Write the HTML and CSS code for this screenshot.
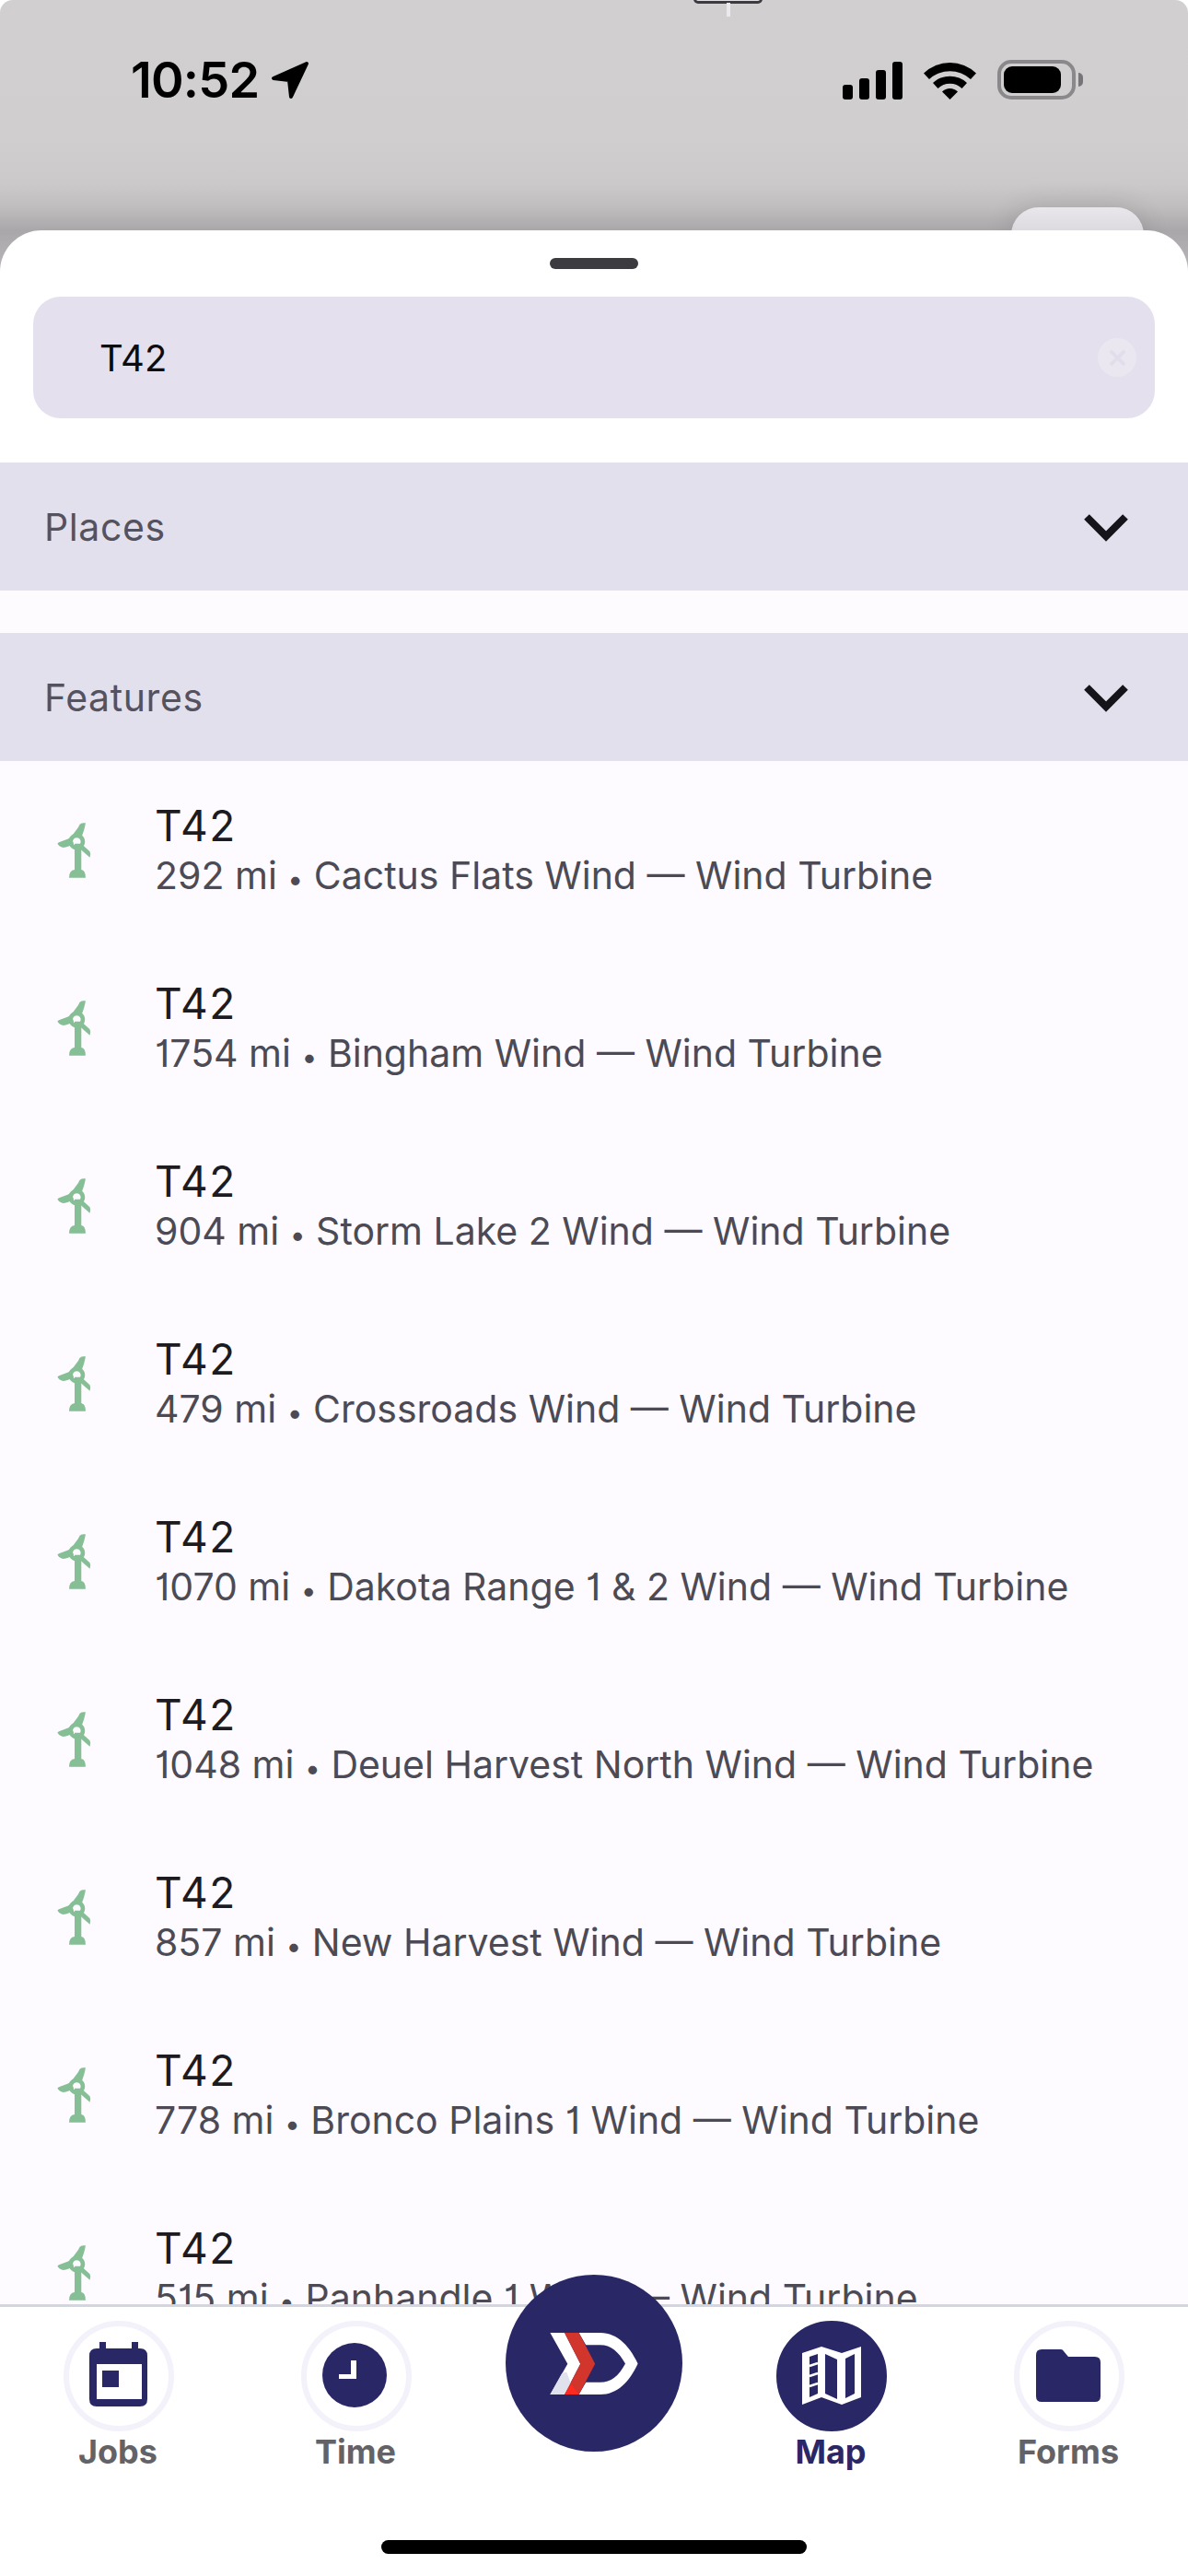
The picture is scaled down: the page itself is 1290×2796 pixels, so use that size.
FILE: index.html
```html
<!DOCTYPE html>
<html lang="en">
<head>
<meta charset="utf-8">
<title>Map search</title>
<link rel="stylesheet" href="styles.css">
</head>
<body>
<svg class="defs" width="0" height="0" aria-hidden="true">
  <symbol id="turbine" viewBox="120 90 120 190">
    <path d="M183 165H205V250Q219 252 219 276H165Q165 252 183 250Z"/>
    <path d="M176 138C182 125 195 115 200 101Q208 95 219 97C216 115 213 125 206 142Z"/>
    <path d="M172 143C160 152 140 155 127 163Q130 172 143 177C155 178 170 172 180 165Z"/>
    <path d="M205 165L233 190Q237 197 233 210C222 200 210 190 197 178Z"/>
    <path fill-rule="evenodd" d="M190 131A27 27 0 1 1 189.900 131ZM190 145A13 13 0 1 0 190.100 145Z"/>
  </symbol>
  <symbol id="chev" viewBox="0 0 48 30">
    <path d="M3 3L24 24L45 3" fill="none" stroke="currentColor" stroke-width="8"/>
  </symbol>
</svg>
<div class="phone">
  <div class="notch"></div>
  <div class="notch-line"></div>
  <header class="status">
    <div class="clock">
      <span class="time">10:52</span>
      <svg class="loc" viewBox="0 0 42 42"><path d="M39 3L3 19L20 21L22 39Z" fill="#000" stroke="#000" stroke-width="4" stroke-linejoin="round"/></svg>
    </div>
    <div class="indicators">
      <div class="signal"><i class="b1"></i><i class="b2"></i><i class="b3"></i><i class="b4"></i></div>
      <svg class="wifi" viewBox="0 0 57 42"><path d="M0 13.500A41 41 0 0 1 57 13.500L51 20A33 33 0 0 0 6 20Z"/><path d="M10 24A27 27 0 0 1 47 24L41.500 30A19 19 0 0 0 15.500 30Z"/><path d="M20 33.500A12 12 0 0 1 37 33.500L28.500 42Z"/></svg>
      <div class="battery"><div class="cell"><div class="fill"></div></div><div class="cap"></div></div>
    </div>
  </header>
  <div class="map-button"></div>
  <main class="sheet">
    <div class="handle"></div>
    <div class="search">
      <span class="query">T42</span>
      <span class="clear"><svg viewBox="0 0 20 20"><path d="M2 2L18 18M18 2L2 18" stroke="#e1deeb" stroke-width="4"/></svg></span>
    </div>
    <section class="band"><span>Places</span><svg class="chevron"><use href="#chev"/></svg></section>
    <div class="gap"></div>
    <section class="band"><span>Features</span><svg class="chevron"><use href="#chev"/></svg></section>
    <div class="list">
      <article class="row"><svg class="turb"><use href="#turbine"/></svg><div class="info"><div class="name">T42</div><div class="sub">292 mi <span class="dot">•</span> Cactus Flats Wind — Wind Turbine</div></div></article>
      <article class="row"><svg class="turb"><use href="#turbine"/></svg><div class="info"><div class="name">T42</div><div class="sub">1754 mi <span class="dot">•</span> Bingham Wind — Wind Turbine</div></div></article>
      <article class="row"><svg class="turb"><use href="#turbine"/></svg><div class="info"><div class="name">T42</div><div class="sub">904 mi <span class="dot">•</span> Storm Lake 2 Wind — Wind Turbine</div></div></article>
      <article class="row"><svg class="turb"><use href="#turbine"/></svg><div class="info"><div class="name">T42</div><div class="sub">479 mi <span class="dot">•</span> Crossroads Wind — Wind Turbine</div></div></article>
      <article class="row"><svg class="turb"><use href="#turbine"/></svg><div class="info"><div class="name">T42</div><div class="sub">1070 mi <span class="dot">•</span> Dakota Range 1 &amp; 2 Wind — Wind Turbine</div></div></article>
      <article class="row"><svg class="turb"><use href="#turbine"/></svg><div class="info"><div class="name">T42</div><div class="sub">1048 mi <span class="dot">•</span> Deuel Harvest North Wind — Wind Turbine</div></div></article>
      <article class="row"><svg class="turb"><use href="#turbine"/></svg><div class="info"><div class="name">T42</div><div class="sub">857 mi <span class="dot">•</span> New Harvest Wind — Wind Turbine</div></div></article>
      <article class="row"><svg class="turb"><use href="#turbine"/></svg><div class="info"><div class="name">T42</div><div class="sub">778 mi <span class="dot">•</span> Bronco Plains 1 Wind — Wind Turbine</div></div></article>
      <article class="row"><svg class="turb"><use href="#turbine"/></svg><div class="info"><div class="name">T42</div><div class="sub">515 mi <span class="dot">•</span> Panhandle 1 Wind — Wind Turbine</div></div></article>
    </div>
    <nav class="tabs">
      <a class="tab">
        <span class="ring">
          <svg class="i-jobs" viewBox="0 0 63 70"><path fill-rule="evenodd" d="M11 0H18V7H46V0H53V7H55Q63 7 63 15V62Q63 70 55 70H8Q0 70 0 62V15Q0 7 8 7H11ZM8 24V62H57V24ZM14 31H32V49H14Z"/></svg>
        </span>
        <span class="label">Jobs</span>
      </a>
      <a class="tab">
        <span class="ring">
          <svg class="i-time" viewBox="0 0 70 70"><circle cx="35" cy="35" r="35"/><path d="M31 19H37V39H18V34H31Z" fill="#fff"/></svg>
        </span>
        <span class="label">Time</span>
      </a>
      <a class="tab tab-hub" aria-label="Home">
        <span class="hub">
          <svg class="logo" viewBox="201 243 287 202">
            <path d="M295 243H365C420 243 460 285 488 344C460 405 420 445 365 445H295L318 405H365C400 405 425 385 447 344C425 305 400 283 365 283H318Z" fill="#fff"/>
            <path d="M201 243H248L300 345L248 445H201L258 345Z" fill="#fff"/>
            <path d="M201 445L240 375L255 372L270 412L248 445Z" fill="#dfe1ec"/>
            <path d="M248 243H295L348 345L295 445H248L300 345Z" fill="#d2352c"/>
            <path d="M248 445L270 412L295 445Z" fill="#ff2a20"/>
          </svg>
        </span>
      </a>
      <a class="tab tab-active">
        <span class="ring ring-filled">
          <svg class="i-map" viewBox="0 0 64 64"><path fill-rule="evenodd" d="M0 7L21 0L43 7L64 0V55L43 63L21 55L0 63ZM8 11V55L17 51V8ZM25 8V51L38 57V14ZM47 13V56L57 51V8Z" fill="#fff"/><path d="M8 21L17 18M8 32L17 29M8 43L17 40" stroke="#fff" stroke-width="2.500"/></svg>
        </span>
        <span class="label">Map</span>
      </a>
      <a class="tab">
        <span class="ring">
          <svg class="i-forms" viewBox="0 0 70 57"><path d="M6 0H27Q29 0 30 2L35 8H64Q70 8 70 14V51Q70 57 64 57H6Q0 57 0 51V6Q0 0 6 0Z"/></svg>
        </span>
        <span class="label">Forms</span>
      </a>
      <div class="home-bar"></div>
    </nav>
  </main>
</div>
</body>
</html>
```
FILE: styles.css
```css
* { box-sizing: border-box; }
html, body { margin: 0; padding: 0; background: #fff; }
body { font-family: Inter, "Liberation Sans", sans-serif; }
.defs { position: absolute; }

.phone {
  position: relative;
  width: 1290px;
  height: 2796px;
  display: flex;
  flex-direction: column;
  overflow: hidden;
  border-radius: 14px 14px 0 0;
  background: linear-gradient(#d1cfd0 0, #d0cecf 150px, #cbc9ca 200px, #bfbdbe 225px, #a9a7a9 250px, #bab8ba 300px, #fff 301px);
}

.notch {
  position: absolute;
  left: 753px;
  top: -6px;
  width: 75px;
  height: 10px;
  border: 3px solid #3c3b42;
  border-radius: 8px;
  background: #e2e0e3;
}
.notch-line {
  position: absolute;
  left: 789px;
  top: 3px;
  width: 4px;
  height: 15px;
  background: #ebe9ed;
}

.status {
  height: 250px;
  flex: none;
  padding: 64px 114px 0 142px;
  display: flex;
  justify-content: space-between;
  align-items: flex-start;
}
.clock { display: flex; align-items: center; gap: 13px; }
.time { font-size: 54px; line-height: 46px; font-weight: 600; color: #000; letter-spacing: -.8px; }
.loc { width: 42px; height: 42px; }
.indicators { display: flex; align-items: flex-end; height: 43px; margin-top: 1px; }
.signal { display: flex; align-items: flex-end; gap: 7px; }
.signal i { display: block; width: 11px; background: #000; border-radius: 3px; }
.b1 { height: 16px; }
.b2 { height: 23px; }
.b3 { height: 32px; }
.b4 { height: 41px; }
.wifi { width: 57px; height: 42px; margin-left: 23px; }
.wifi path { fill: #000; }
.battery { display: flex; align-items: center; margin-left: 23px; }
.cell { width: 85px; height: 43px; border: 4px solid #8a888b; border-radius: 15px; padding: 3px 12px 3px 3px; }
.fill { height: 100%; background: #000; border-radius: 9px; }
.cap { width: 5px; height: 15px; margin-left: 3px; background: #77757a; border-radius: 0 5px 5px 0; }

.map-button {
  position: absolute;
  left: 1098px;
  top: 225px;
  width: 144px;
  height: 60px;
  border-radius: 30px;
  background: linear-gradient(#e9e7eb, #dcdade 25px);
  box-shadow: 0 0 30px rgba(0, 0, 0, .14);
}

.sheet {
  position: relative;
  flex: 1;
  min-height: 0;
  display: flex;
  flex-direction: column;
  background: #fff;
  border-radius: 45px 45px 0 0;
}
.handle {
  width: 96px;
  height: 12px;
  margin: 30px auto 30px;
  background: #3c3b40;
  border-radius: 6px;
  flex: none;
}
.search {
  flex: none;
  height: 132px;
  margin: 0 36px 48px;
  padding: 0 20px 0 72px;
  display: flex;
  align-items: center;
  justify-content: space-between;
  background: #e4e0ee;
  border-radius: 30px;
}
.query { font-size: 40px; color: #0c0c10; }
.clear {
  width: 42px;
  height: 42px;
  border-radius: 50%;
  background: #ebe7f1;
  display: flex;
  align-items: center;
  justify-content: center;
}
.clear svg { width: 19px; height: 19px; }

.band {
  flex: none;
  height: 139px;
  padding: 0 65px 0 48px;
  display: flex;
  align-items: center;
  justify-content: space-between;
  background: #e3e0ed;
  font-size: 41px;
  letter-spacing: .6px;
  color: #55525f;
}
.chevron { width: 48px; height: 30px; margin-top: 2px; color: #15141a; }
.gap { flex: none; height: 46px; background: #fdfbfe; }

.list { flex: 1; min-height: 0; overflow: hidden; background: #fdfbff; }
.row {
  height: 193px;
  display: flex;
  align-items: center;
  padding-left: 60px;
}
.turb { width: 40px; height: 63px; fill: #86bf95; flex: none; margin-right: 68px; }
.name { font-size: 46px; line-height: 54px; letter-spacing: 1.5px; color: #1c1b22; }
.sub { font-size: 41px; line-height: 54px; color: #4c4a54; white-space: nowrap; font-feature-settings: "cv01"; }
.dot { font-size: 30px; line-height: 0; }

.tabs {
  position: relative;
  flex: none;
  height: 295px;
  display: grid;
  grid-template-columns: repeat(5, 1fr);
  align-items: start;
  padding-top: 15px;
  border-top: 3px solid #d2d6e1;
  background: #fff;
}
.tab {
  display: flex;
  flex-direction: column;
  align-items: center;
  color: #636266;
}
.tab-active { color: #2a2766; }
.ring {
  width: 120px;
  height: 120px;
  border: 6px solid #f3f2fb;
  border-radius: 50%;
  display: flex;
  align-items: center;
  justify-content: center;
}
.ring svg { fill: #2a2766; }
.ring-filled { background: #2a2766; border-color: #2a2766; }
.label { font-size: 36px; line-height: 44px; font-weight: 700; margin-top: 0; margin-right: 2px; }
.i-jobs { width: 63px; height: 70px; margin-top: -4px; margin-left: -2px; }
.i-time { width: 70px; height: 70px; margin-left: -4px; margin-top: -2px; }
.i-map { width: 64px; height: 64px; margin-top: -1px; }
.i-forms { width: 70px; height: 57px; margin-left: -3px; margin-top: -1px; }

.tab-hub { position: relative; }
.hub {
  position: absolute;
  left: 33px;
  top: -50px;
  width: 192px;
  height: 192px;
  border-radius: 50%;
  background: #2a2766;
  display: flex;
  align-items: center;
  justify-content: center;
}
.logo { width: 96px; height: 67px; }

.home-bar {
  position: absolute;
  left: 414px;
  top: 253px;
  width: 462px;
  height: 15px;
  background: #000;
  border-radius: 8px;
}
```
